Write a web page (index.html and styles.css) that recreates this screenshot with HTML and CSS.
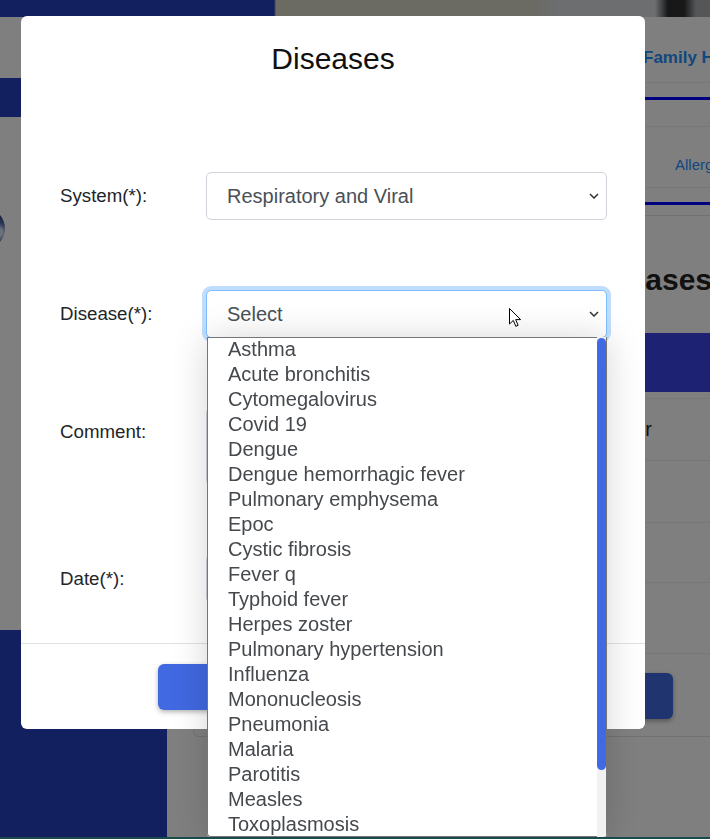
FILE: index.html
```html
<!DOCTYPE html>
<html lang="en">
<head>
<meta charset="utf-8">
<title>Diseases</title>
<link rel="stylesheet" href="styles.css">
</head>
<body>
<div class="page">
  <div class="banner"></div>
  <div class="layout">
    <aside class="sidebar">
      <div class="side-top"></div>
      <div class="side-band"></div>
      <div class="side-profile"><div class="avatar"></div></div>
      <nav class="side-menu"></nav>
    </aside>
    <main class="main">
      <div class="tabs tabs-primary"><span class="tab tab-strong">Family History</span></div>
      <div class="subbar"><div class="subbar-line"></div></div>
      <div class="tabs tabs-secondary"><span class="tab">Allergies</span></div>
      <div class="tab-indicator"></div>
      <section class="card">
        <h2 class="page-title">Diseases</h2>
        <div class="thead"></div>
        <div class="trow row-1"><span class="cell">Doctor</span></div>
        <div class="trow row-2"></div>
        <div class="trow row-3"></div>
        <div class="trow row-4"></div>
        <div class="trow row-5"><button class="page-btn" aria-label="Add disease"></button></div>
      </section>
    </main>
  </div>
</div>

<div class="backdrop"></div>

<div class="modal" role="dialog" aria-labelledby="modal-title">
  <div class="modal-header">
    <h1 class="modal-title" id="modal-title">Diseases</h1>
  </div>
  <div class="modal-body">
    <label class="field-label">System(*):</label>
    <div class="control">
      <div class="select">
        <span>Respiratory and Viral</span>
        <svg class="chevron" width="10" height="6" viewBox="0 0 10 6"><path d="M1 1 L5 5 L9 1" fill="none" stroke="#333" stroke-width="1.5"/></svg>
      </div>
    </div>

    <label class="field-label">Disease(*):</label>
    <div class="control">
      <div class="select is-focused">
        <span>Select</span>
        <svg class="chevron" width="10" height="6" viewBox="0 0 10 6"><path d="M1 1 L5 5 L9 1" fill="none" stroke="#333" stroke-width="1.5"/></svg>
      </div>
      <div class="listbox" role="listbox">
        <ul class="options">
          <li>Asthma</li>
          <li>Acute bronchitis</li>
          <li>Cytomegalovirus</li>
          <li>Covid 19</li>
          <li>Dengue</li>
          <li>Dengue hemorrhagic fever</li>
          <li>Pulmonary emphysema</li>
          <li>Epoc</li>
          <li>Cystic fibrosis</li>
          <li>Fever q</li>
          <li>Typhoid fever</li>
          <li>Herpes zoster</li>
          <li>Pulmonary hypertension</li>
          <li>Influenza</li>
          <li>Mononucleosis</li>
          <li>Pneumonia</li>
          <li>Malaria</li>
          <li>Parotitis</li>
          <li>Measles</li>
          <li>Toxoplasmosis</li>
        </ul>
        <div class="scroll-track"><div class="scroll-thumb"></div></div>
      </div>
    </div>

    <label class="field-label">Comment:</label>
    <div class="control">
      <div class="textarea"></div>
    </div>

    <label class="field-label">Date(*):</label>
    <div class="control">
      <div class="input"></div>
    </div>
  </div>
  <div class="modal-footer">
    <button class="btn" aria-label="Save"></button>
    <button class="btn" aria-label="Close"></button>
  </div>
</div>

<svg class="cursor" width="13" height="20" viewBox="0 0 13 20">
  <path d="M0.5 0.5 L0.5 16 L4.3 12.4 L6.8 18.3 L9.1 17.3 L6.7 11.6 L11.6 11.6 Z" fill="#fff" stroke="#000" stroke-width="1" stroke-linejoin="miter"/>
</svg>

<div class="screen-edge"></div>
</body>
</html>
```

FILE: styles.css
```css
* { box-sizing: border-box; }

html, body {
  margin: 0;
  height: 100%;
}

body {
  font-family: "Liberation Sans", Arial, sans-serif;
  color: #212529;
  background: #fff;
  overflow: hidden;
}

/* ---------- underlying page ---------- */
.page {
  height: 100vh;
  display: flex;
  flex-direction: column;
}

.banner {
  height: 17px;
  flex: none;
  background: linear-gradient(90deg,
    #2540be 0 274px,
    #d6d4c6 276px 530px,
    #d8dce0 560px 655px,
    #303030 668px 684px,
    #a8acb0 696px);
}

.layout {
  flex: 1;
  min-height: 0;
  display: grid;
  grid-template-columns: 167px 1fr;
}

.sidebar {
  display: flex;
  flex-direction: column;
  overflow: hidden;
}

.side-top { height: 61px; }

.side-band {
  height: 39px;
  background: #2540be;
}

.side-profile {
  height: 513px;
  padding-top: 91px;
}

.avatar {
  width: 41px;
  height: 41px;
  margin-left: -36px;
  border-radius: 50%;
  background: radial-gradient(circle at 85% 60%, #d8e4f4 0 8%, #5470b0 22%, #26346e 45%, #121a44 100%);
}

.side-menu {
  flex: 1;
  background: #2540be;
}

.main {
  overflow: hidden;
  display: flex;
  flex-direction: column;
}

.tabs {
  display: flex;
  align-items: flex-end;
  border-bottom: 1px solid #eeeeee;
  white-space: nowrap;
}

.tabs-primary {
  height: 66px;
  padding: 0 0 14px 476px;
}

.tabs-secondary {
  height: 61px;
  padding: 0 0 13px 508px;
}

.tab {
  color: #1f90ff;
  font-size: 15px;
  line-height: 18px;
}

.tab-strong {
  font-size: 17px;
  line-height: 20px;
  font-weight: 700;
}

.subbar {
  height: 44px;
  border-bottom: 1px solid #eeeeee;
  padding-top: 14px;
}

.subbar-line {
  height: 3px;
  background: #0000ff;
}

.tab-indicator {
  height: 3px;
  margin-top: 14px;
  background: #0000ff;
}

.card {
  width: 908px;
  flex: none;
  margin: 10px 0 0 26px;
  padding-top: 46px;
  border: 1px solid #dee2e6;
  border-radius: 6px;
}

.page-title {
  margin: 0 0 35px;
  text-align: center;
  font-size: 30px;
  line-height: 36px;
  font-weight: 700;
  color: #222;
}

.thead {
  height: 59px;
  margin-bottom: 6px;
  background: #3c44e4;
}

.trow {
  display: flex;
  align-items: center;
  border-top: 1px solid #eeeeee;
  font-size: 20px;
  color: #222;
}

.row-1 { height: 62px; padding-left: 399px; }
.row-2 { height: 62px; }
.row-3 { height: 60px; }
.row-4 { height: 71px; }
.row-5 {
  height: 83px;
  align-items: flex-start;
  padding: 19px 0 0 339px;
}

.page-btn {
  width: 140px;
  height: 46px;
  border: 0;
  border-radius: 6px;
  background: #4169e1;
  box-shadow: 0 2px 5px rgba(0, 0, 0, 0.35);
}

/* ---------- modal ---------- */
.backdrop {
  position: fixed;
  inset: 0;
  background: rgba(0, 0, 0, 0.5);
}

.modal {
  position: fixed;
  left: 21px;
  top: 16px;
  width: 624px;
  height: 713px;
  background: #fff;
  border-radius: 6px;
  display: flex;
  flex-direction: column;
}

.modal-header {
  height: 85px;
  flex: none;
  display: flex;
  align-items: center;
  justify-content: center;
}

.modal-title {
  margin: 0;
  font-size: 30px;
  line-height: 45px;
  font-weight: 400;
  color: #111;
}

.modal-body {
  flex: 1;
  padding: 71px 38px 0 39px;
  display: grid;
  grid-template-columns: 146px 1fr;
  row-gap: 70px;
  align-content: start;
}

.field-label {
  font-size: 18.7px;
  line-height: 28px;
  padding-top: 10px;
  color: #212529;
}

.control {
  position: relative;
}

.select {
  height: 48px;
  border: 1px solid #ced4da;
  border-radius: 5px;
  background: #fff;
  display: flex;
  align-items: center;
  justify-content: space-between;
  padding: 0 7px 0 20px;
  font-size: 20px;
  color: #495057;
}

.select.is-focused {
  border-color: #80bdff;
  box-shadow: 0 0 0 4px rgba(0, 123, 255, 0.25);
}

.chevron { flex: none; }

.textarea {
  height: 77px;
  border: 1px solid #ced4da;
  border-radius: 5px;
}

.input {
  height: 48px;
  border: 1px solid #ced4da;
  border-radius: 5px;
}

.listbox {
  position: absolute;
  z-index: 5;
  top: 47px;
  left: 1px;
  width: 400px;
  height: 500px;
  background: #fff;
  border-radius: 0 0 4px 4px;
  overflow: hidden;
  display: grid;
  grid-template-columns: 1fr 9px;
  padding-right: 1px;
  box-shadow: inset 0 0 0 1px #767676, 0 2px 36px rgba(0, 0, 0, 0.17);
}

.options {
  margin: 0;
  padding: 0;
  list-style: none;
}

.options li {
  height: 25px;
  line-height: 25px;
  padding-left: 21px;
  font-size: 20px;
  color: #45494d;
  white-space: nowrap;
}

.scroll-track {
  background: #f1f1f1;
}

.scroll-thumb {
  height: 432px;
  margin-top: 1px;
  border-radius: 5px;
  background: #4169e1;
}

.modal-footer {
  height: 86px;
  flex: none;
  border-top: 1px solid #dee2e6;
  display: flex;
  justify-content: center;
  gap: 20px;
  padding-top: 20px;
}

.btn {
  width: 165px;
  height: 46px;
  border: 0;
  border-radius: 6px;
  background: linear-gradient(90deg, #4169e1, #3f66dd);
  box-shadow: 0 2px 5px rgba(0, 0, 0, 0.3);
}

/* ---------- overlays ---------- */
.cursor {
  position: fixed;
  left: 509px;
  top: 308px;
  z-index: 20;
}

.screen-edge {
  position: fixed;
  left: 0;
  right: 0;
  bottom: 0;
  height: 2px;
  background: #1b4a48;
  z-index: 20;
}
```
